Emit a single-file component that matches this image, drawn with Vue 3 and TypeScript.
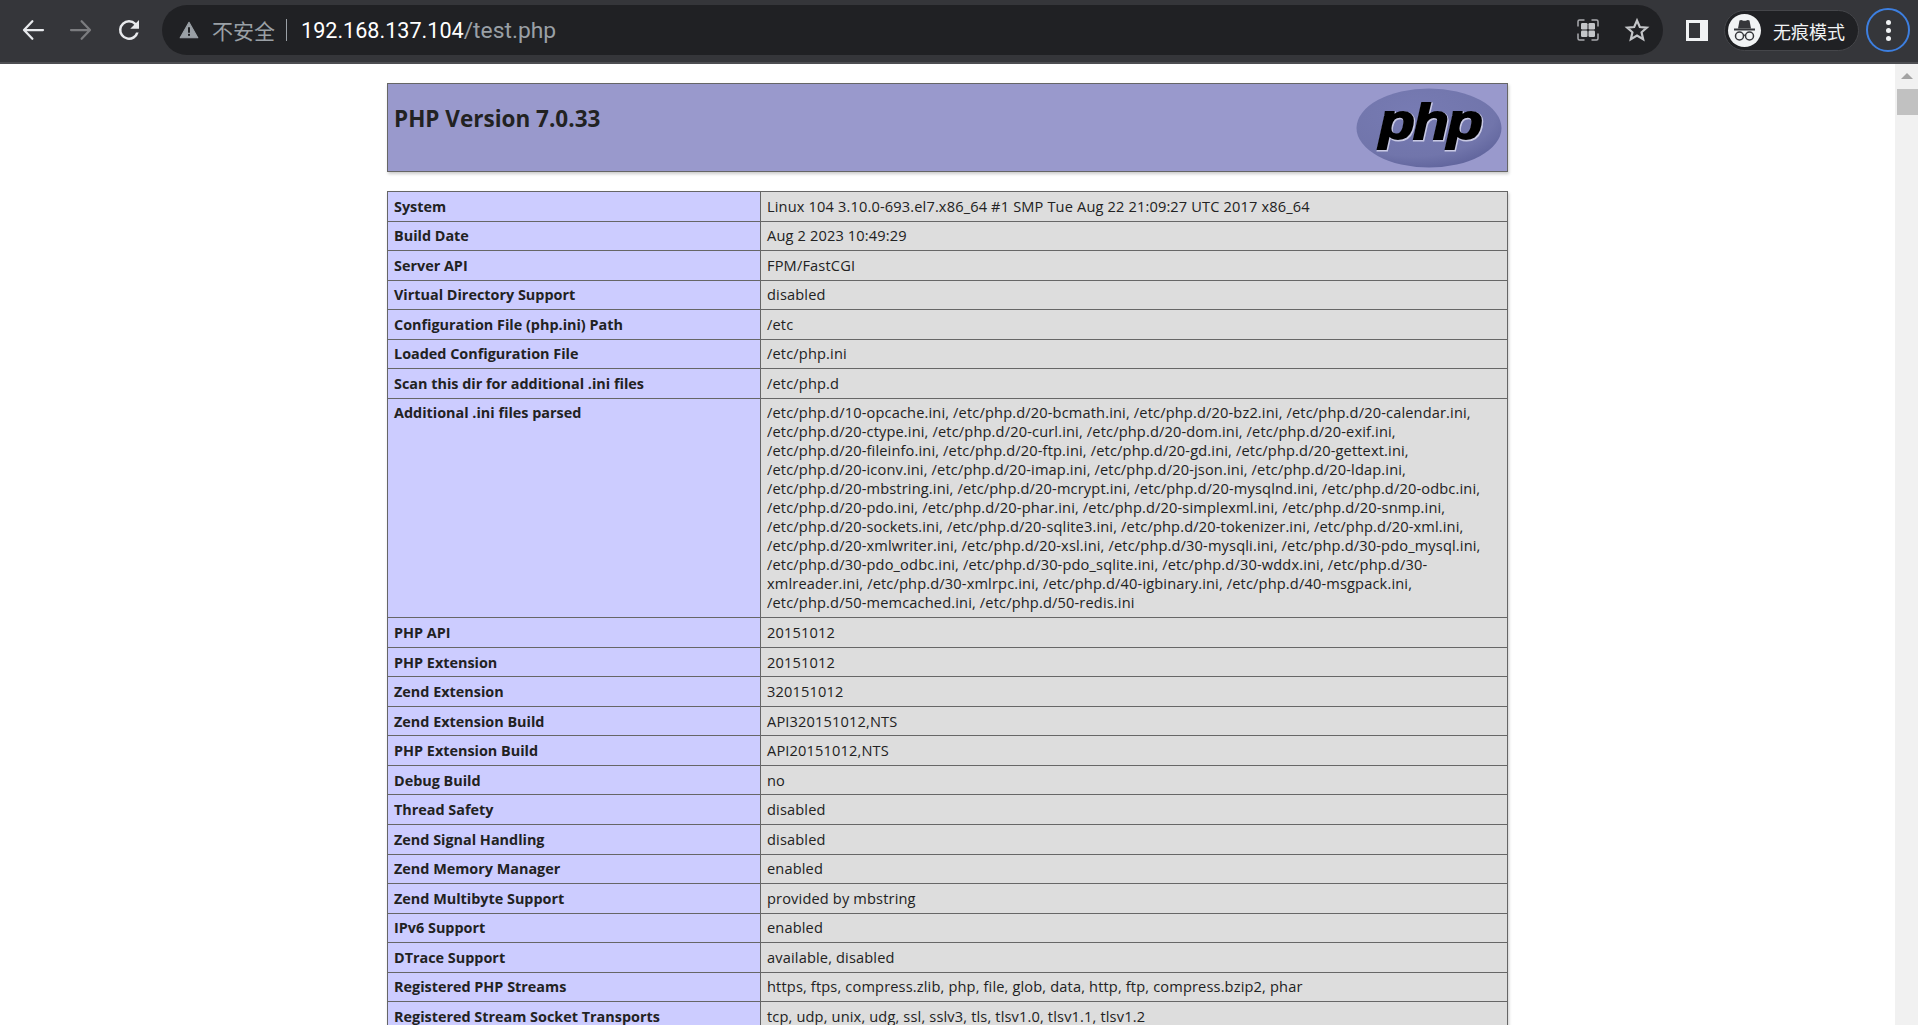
<template>
  <div class="window">
    <header class="toolbar">
      <div class="nav">
        <svg class="nav-icon" viewBox="0 0 24 24"><path d="M20 12H5M11.500 5 4.800 12l6.700 7" fill="none" stroke="#e8eaed" stroke-width="1.800" stroke-linecap="round" stroke-linejoin="round" /></svg>
        <svg class="nav-icon" viewBox="0 0 24 24"><path d="M4 12h15M12.500 5l6.700 7-6.700 7" fill="none" stroke="#7b7c7f" stroke-width="1.800" stroke-linecap="round" stroke-linejoin="round" /></svg>
        <svg class="nav-icon" viewBox="0 0 24 24"><path d="M17.650 6.350A7.960 7.960 0 0 0 12 4a8 8 0 1 0 7.730 10h-2.080A6 6 0 1 1 12 6c1.660 0 3.140.690 4.220 1.780L13 11h7V4z" fill="#e8eaed" /></svg>
      </div>
      <div class="omnibox">
        <svg class="warn" viewBox="0 0 20 20"><path d="M10 3 18 17H2z" fill="#9aa0a6" stroke="#9aa0a6" stroke-width="1" stroke-linejoin="round" /><rect x="9.100" y="7.500" width="1.800" height="5" fill="#202124" /><rect x="9.100" y="13.500" width="1.800" height="1.800" fill="#202124" /></svg>
        <span class="insecure">不安全</span>
        <span class="sep"></span>
        <span class="host">192.168.137.104</span><span class="path">/test.php</span>
        <span class="grow"></span>
        <svg class="qr" viewBox="0 0 22 22">
          <path d="M1 7.500V2.500A1.500 1.500 0 0 1 2.500 1H7.500M14.500 1h5A1.500 1.500 0 0 1 21 2.500V7.500M21 14.500v5a1.500 1.500 0 0 1-1.500 1.500H14.500M7.500 21H2.500A1.500 1.500 0 0 1 1 19.500V14.500" fill="none" stroke="#a9abae" stroke-width="1.500" />
          <rect x="4" y="4" width="6.500" height="6.500" rx="1.200" fill="#c4c6c9" />
          <rect x="11.500" y="4" width="6.500" height="6.500" rx="1.200" fill="#c4c6c9" />
          <rect x="4" y="11.500" width="6.500" height="6.500" rx="1.200" fill="#c4c6c9" />
          <rect x="11.500" y="11.500" width="6.500" height="6.500" rx="1.200" fill="#c4c6c9" />
        </svg>
        <svg class="star" viewBox="0 0 24 24"><path d="M12 3.200l2.600 6 6.500.6-4.900 4.300 1.500 6.400L12 17.100l-5.700 3.400 1.500-6.400-4.900-4.300 6.500-.6z" fill="none" stroke="#c4c6c9" stroke-width="2" stroke-linejoin="miter" /></svg>
      </div>
      <div class="panel-btn"><span class="panel-left"></span></div>
      <div class="profile">
        <span class="avatar">
          <svg viewBox="0 0 33 33">
            <path d="M11.500 6.500q1.500-.8 2.500-.3 2.500 1 5 0 1-.5 2.500.3l1.500 8h-13z" fill="#35363a" />
            <rect x="6" y="14.500" width="21" height="2" fill="#35363a" />
            <circle cx="11.500" cy="22" r="4" fill="none" stroke="#35363a" stroke-width="1.500" />
            <circle cx="21.500" cy="22" r="4" fill="none" stroke="#35363a" stroke-width="1.500" />
            <path d="M15.300 21.500q1.200-.8 2.400 0" fill="none" stroke="#35363a" stroke-width="1.300" />
          </svg>
        </span>
        <span class="profile-name">无痕模式</span>
      </div>
      <div class="menu-btn"><i></i><i></i><i></i></div>
    </header>

    <div class="viewport">
      <main class="page">
        <div class="center">
          <div class="banner">
            <h1>PHP Version 7.0.33</h1>
            <svg class="logo" viewBox="0 0 146 80">
              <defs>
                <radialGradient id="oval" cx="40%" cy="30%" r="80%">
                  <stop offset="0" stop-color="#777bb3" />
                  <stop offset="0.7" stop-color="#7175ab" />
                  <stop offset="1" stop-color="#5a5e97" />
                </radialGradient>
              </defs>
              <ellipse cx="73" cy="40" rx="72.500" ry="39.500" fill="url(#oval)" />
              <g transform="translate(74 0) scale(1.170 1)">
                <text class="logo-shadow" x="0.600" y="52" text-anchor="middle">php</text>
                <text class="logo-text" x="0" y="51.500" text-anchor="middle">php</text>
              </g>
            </svg>
          </div>
          <table class="info">
            <tbody>
              <tr v-for="row in rows" :key="row[0]">
                <td class="e">{{ row[0] }}</td>
                <td class="v">
                  <template v-if="typeof row[1] === 'string'">{{ row[1] }}</template>
                  <div v-for="line in row[1]" v-else :key="line">{{ line }}</div>
                </td>
              </tr>
            </tbody>
          </table>
        </div>
      </main>
      <aside class="scrollbar">
        <span class="arrow"></span>
        <span class="thumb"></span>
      </aside>
    </div>
  </div>
</template>

<script setup lang="ts">
const iniFiles: string[] = [
  '/etc/php.d/10-opcache.ini, /etc/php.d/20-bcmath.ini, /etc/php.d/20-bz2.ini, /etc/php.d/20-calendar.ini,',
  '/etc/php.d/20-ctype.ini, /etc/php.d/20-curl.ini, /etc/php.d/20-dom.ini, /etc/php.d/20-exif.ini,',
  '/etc/php.d/20-fileinfo.ini, /etc/php.d/20-ftp.ini, /etc/php.d/20-gd.ini, /etc/php.d/20-gettext.ini,',
  '/etc/php.d/20-iconv.ini, /etc/php.d/20-imap.ini, /etc/php.d/20-json.ini, /etc/php.d/20-ldap.ini,',
  '/etc/php.d/20-mbstring.ini, /etc/php.d/20-mcrypt.ini, /etc/php.d/20-mysqlnd.ini, /etc/php.d/20-odbc.ini,',
  '/etc/php.d/20-pdo.ini, /etc/php.d/20-phar.ini, /etc/php.d/20-simplexml.ini, /etc/php.d/20-snmp.ini,',
  '/etc/php.d/20-sockets.ini, /etc/php.d/20-sqlite3.ini, /etc/php.d/20-tokenizer.ini, /etc/php.d/20-xml.ini,',
  '/etc/php.d/20-xmlwriter.ini, /etc/php.d/20-xsl.ini, /etc/php.d/30-mysqli.ini, /etc/php.d/30-pdo_mysql.ini,',
  '/etc/php.d/30-pdo_odbc.ini, /etc/php.d/30-pdo_sqlite.ini, /etc/php.d/30-wddx.ini, /etc/php.d/30-',
  'xmlreader.ini, /etc/php.d/30-xmlrpc.ini, /etc/php.d/40-igbinary.ini, /etc/php.d/40-msgpack.ini,',
  '/etc/php.d/50-memcached.ini, /etc/php.d/50-redis.ini',
]

const rows: [string, string | string[]][] = [
  ['System', 'Linux 104 3.10.0-693.el7.x86_64 #1 SMP Tue Aug 22 21:09:27 UTC 2017 x86_64'],
  ['Build Date', 'Aug 2 2023 10:49:29'],
  ['Server API', 'FPM/FastCGI'],
  ['Virtual Directory Support', 'disabled'],
  ['Configuration File (php.ini) Path', '/etc'],
  ['Loaded Configuration File', '/etc/php.ini'],
  ['Scan this dir for additional .ini files', '/etc/php.d'],
  ['Additional .ini files parsed', iniFiles],
  ['PHP API', '20151012'],
  ['PHP Extension', '20151012'],
  ['Zend Extension', '320151012'],
  ['Zend Extension Build', 'API320151012,NTS'],
  ['PHP Extension Build', 'API20151012,NTS'],
  ['Debug Build', 'no'],
  ['Thread Safety', 'disabled'],
  ['Zend Signal Handling', 'disabled'],
  ['Zend Memory Manager', 'enabled'],
  ['Zend Multibyte Support', 'provided by mbstring'],
  ['IPv6 Support', 'enabled'],
  ['DTrace Support', 'available, disabled'],
  ['Registered PHP Streams', 'https, ftps, compress.zlib, php, file, glob, data, http, ftp, compress.bzip2, phar'],
  ['Registered Stream Socket Transports', 'tcp, udp, unix, udg, ssl, sslv3, tls, tlsv1.0, tlsv1.1, tlsv1.2'],
]
</script>

<style>
html, body { margin: 0; height: 100%; overflow: hidden; background: #fff; }
</style>

<style scoped>
.window {
  height: 1025px;
  display: flex;
  flex-direction: column;
  overflow: hidden;
  font-family: "Open Sans", "Noto Sans CJK SC", sans-serif;
}
.toolbar {
  height: 62px;
  flex-shrink: 0;
  display: flex;
  align-items: flex-start;
  background: #35363a;
  border-bottom: 2px solid #4d4e52;
}
.nav {
  display: flex;
  gap: 18px;
  padding: 15px 0 0 18px;
  width: 144px;
  box-sizing: border-box;
}
.nav-icon { width: 30px; height: 30px; display: block; }
.omnibox {
  margin: 5px 0 0 18px;
  width: 1501px;
  height: 50px;
  box-sizing: border-box;
  border-radius: 25px;
  background: #202124;
  display: flex;
  align-items: center;
  padding: 0 11px 0 16px;
  font-family: Roboto, "Noto Sans CJK SC", sans-serif;
  font-size: 21.600px;
  white-space: nowrap;
}
.warn { width: 22px; height: 22px; flex-shrink: 0; }
.insecure { margin-left: 12px; color: #9aa0a6; font-size: 21px; }
.sep { width: 1px; height: 22px; background: #9aa0a6; margin: 0 14px 0 11px; }
.host { color: #fff; }
.path { color: #9aa0a6; font-size: 22.800px; }
.grow { flex: 1; }
.qr { width: 22px; height: 22px; margin-right: 25px; }
.star { width: 26px; height: 26px; margin-right: 2px; }
.panel-btn {
  margin: 20px 0 0 23px;
  width: 22px;
  height: 21px;
  box-sizing: border-box;
  background: #f1f3f4;
  padding: 3px;
}
.panel-left { display: block; width: 11px; height: 100%; background: #35363a; }
.profile {
  margin: 10px 0 0 16px;
  width: 135px;
  height: 41px;
  box-sizing: border-box;
  border-radius: 21px;
  background: #202124;
  border: 1px solid #45464a;
  display: flex;
  align-items: center;
  padding-left: 3px;
  color: #f1f3f4;
}
.avatar {
  width: 33px;
  height: 33px;
  border-radius: 50%;
  background: #f1f3f4;
  display: block;
  flex-shrink: 0;
}
.avatar svg { display: block; width: 33px; height: 33px; }
.profile-name { margin-left: 12px; font-size: 18px; font-family: "Noto Sans CJK SC", sans-serif; white-space: nowrap; }
.menu-btn {
  margin: 8px 0 0 7px;
  width: 44px;
  height: 44px;
  box-sizing: border-box;
  border: 2px solid #3d7fe0;
  border-radius: 50%;
  display: flex;
  flex-direction: column;
  align-items: center;
  justify-content: center;
  gap: 3px;
}
.menu-btn i { display: block; width: 5px; height: 5px; border-radius: 50%; background: #f1f3f4; }

.viewport { flex: 1; min-height: 0; display: flex; background: #fff; }
.page { flex: 1; min-width: 0; overflow: hidden; padding-top: 19px; }
.center { width: 1121px; margin-left: 387px; color: #222; font-size: 14.400px; }
.banner {
  height: 89px;
  box-sizing: border-box;
  background: #9999cc;
  border: 1px solid #666;
  box-shadow: 1px 2px 3px #ccc;
  display: flex;
  justify-content: space-between;
  padding: 5px 5px 0 6px;
}
h1 { margin: 15px 0 0; font-size: 22.500px; line-height: 30px; font-weight: 700; }
.logo { width: 146px; height: 80px; margin-top: -1px; }
.logo-text, .logo-shadow {
  font-family: "Liberation Sans", sans-serif;
  font-weight: 700;
  font-style: italic;
  font-size: 50px;
  letter-spacing: -1.500px;
}
.logo-text { fill: #000; stroke: #000; stroke-width: 1.800px; }
.logo-shadow { fill: #fff; stroke: #c8c9e4; stroke-width: 2.800px; }
.info {
  margin-top: 19px;
  width: 1121px;
  table-layout: fixed;
  border-collapse: collapse;
  box-shadow: 1px 2px 3px #ccc;
}
td {
  box-sizing: border-box;
  border: 1px solid #666;
  padding: 4.780px 6px;
  line-height: 19px;
  vertical-align: baseline;
  white-space: nowrap;
}
.e { width: 373px; background: #ccccff; font-weight: 700; }
.v { background: #dddddd; font-size: 14.600px; letter-spacing: 0.150px; }

.scrollbar {
  width: 23px;
  flex-shrink: 0;
  background: #f1f1f1;
  display: flex;
  flex-direction: column;
  align-items: flex-end;
}
.arrow {
  width: 0;
  height: 0;
  margin: 9px 5px 0 0;
  border-left: 6px solid transparent;
  border-right: 6px solid transparent;
  border-bottom: 6px solid #a3a3a3;
}
.thumb { width: 21px; height: 26px; margin-top: 10px; background: #c1c1c1; }
</style>
